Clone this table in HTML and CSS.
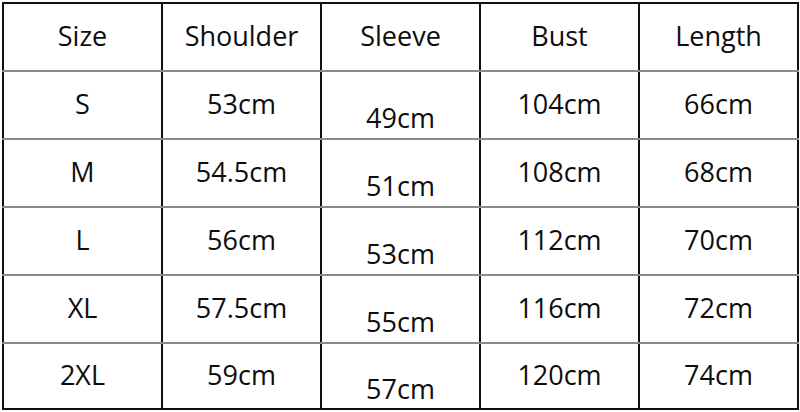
FILE: index.html
```html
<!DOCTYPE html>
<html lang="en">
<head>
<meta charset="utf-8">
<title>Size chart</title>
<link rel="stylesheet" href="styles.css">
</head>
<body>
<table class="chart">
  <colgroup>
    <col class="c"><col class="c"><col class="c"><col class="c"><col class="c">
  </colgroup>
  <thead>
    <tr class="head">
      <th>Size</th><th>Shoulder</th><th>Sleeve</th><th>Bust</th><th>Length</th>
    </tr>
  </thead>
  <tbody>
    <tr><td>S</td><td>53cm</td><td class="low">49cm</td><td>104cm</td><td>66cm</td></tr>
    <tr><td>M</td><td>54.5cm</td><td class="low">51cm</td><td>108cm</td><td>68cm</td></tr>
    <tr><td>L</td><td>56cm</td><td class="low">53cm</td><td>112cm</td><td>70cm</td></tr>
    <tr><td>XL</td><td>57.5cm</td><td class="low">55cm</td><td>116cm</td><td>72cm</td></tr>
    <tr class="last"><td>2XL</td><td>59cm</td><td class="low">57cm</td><td>120cm</td><td>74cm</td></tr>
  </tbody>
</table>
</body>
</html>
```
FILE: styles.css
```css
html, body {
  margin: 0;
  padding: 0;
  background: #ffffff;
}
body {
  padding: 2px 0 0 2px;
}
.chart {
  border-collapse: collapse;
  table-layout: fixed;
  width: 796px;
  font-family: "Open Sans", "Liberation Sans", sans-serif;
  font-size: 27px;
  line-height: 32px;
  color: #0d0d0d;
  border: 2px solid #111111;
}
.chart .c {
  width: 159px;
}
.chart th,
.chart td {
  height: 68px;
  padding: 0 0 2px 0;
  text-align: center;
  vertical-align: middle;
  font-weight: 400;
  border-left: 2px solid #111111;
  border-right: 2px solid #111111;
  border-top: 2px solid #8a8a8a;
  border-bottom: 2px solid #8a8a8a;
  box-sizing: border-box;
}
.chart .head th {
  border-top: 2px solid #111111;
}
.chart tr.last td {
  height: 66px;
  border-bottom: 2px solid #111111;
}
.chart td.low {
  padding: 26px 0 0 0;
}
```
